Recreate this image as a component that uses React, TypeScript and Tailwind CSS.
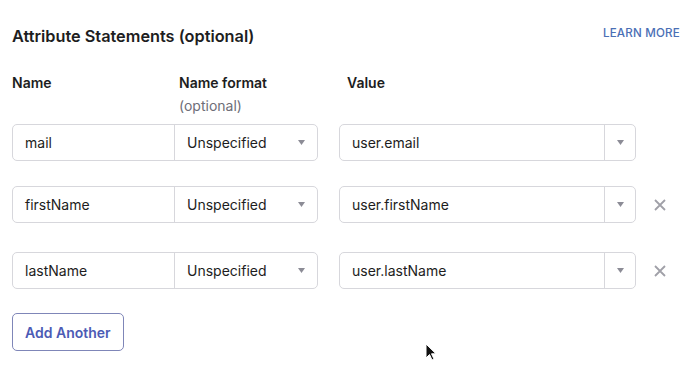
import React from "react";

type Row = { name: string; value: string; removable: boolean; gap: string };

const rows: Row[] = [
  { name: "mail", value: "user.email", removable: false, gap: "mt-[8px]" },
  { name: "firstName", value: "user.firstName", removable: true, gap: "mt-[25px]" },
  { name: "lastName", value: "user.lastName", removable: true, gap: "mt-[29px]" },
];

function Caret() {
  return (
    <svg width="7" height="5" viewBox="0 0 7 5" className="text-[#8c8c96]">
      <path d="M0 0 H7 L3.5 5 Z" fill="currentColor" />
    </svg>
  );
}

function AttributeRow({ row }: { row: Row }) {
  return (
    <div className={`flex items-center ${row.gap}`}>
      <div className="flex w-[306px] h-[37px] rounded-[5px] border border-[#d7d7dc] bg-white">
        <div className="w-[162px] flex items-center pl-3 border-r border-[#d7d7dc] text-[14px] text-[#1d1d21]">
          {row.name}
        </div>
        <div className="flex-1 flex items-center justify-between pl-3 pr-3 text-[14px] text-[#1d1d21]">
          <span>Unspecified</span>
          <Caret />
        </div>
      </div>
      <div className="ml-[21px] flex w-[297px] h-[37px] rounded-[5px] border border-[#d7d7dc] bg-white">
        <div className="flex-1 flex items-center pl-3 border-r border-[#d7d7dc] text-[14px] text-[#1d1d21]">
          {row.value}
        </div>
        <div className="w-[30px] flex items-center justify-center">
          <Caret />
        </div>
      </div>
      {row.removable && (
        <svg width="12" height="12" viewBox="0 0 12 12" className="ml-[18px] text-[#a0a0a8]">
          <path d="M1 1 L11 11 M11 1 L1 11" stroke="currentColor" strokeWidth="1.8" />
        </svg>
      )}
    </div>
  );
}

export default function App() {
  return (
    <div
      className="relative w-[688px] h-[377px] bg-white pl-3 pr-2 pt-6 overflow-hidden"
      style={{ fontFamily: "Inter, 'Noto Sans', sans-serif" }}
    >
      <div className="flex items-center justify-between">
        <h1 className="text-[16.3px] leading-6 font-semibold text-[#1d1d21]">
          Attribute Statements (optional)
        </h1>
        <a className="text-[11.6px] font-medium text-[#4a6fb5] tracking-[0.2px] -mt-1">
          LEARN MORE
        </a>
      </div>
      <div className="flex mt-[25px] text-[14px] leading-5">
        <div className="w-[167px] font-semibold text-[#1d1d21]">Name</div>
        <div className="w-[168px]">
          <div className="font-semibold text-[#1d1d21]">Name format</div>
          <div className="mt-[3px] text-[#6e6e78]">(optional)</div>
        </div>
        <div className="font-semibold text-[#1d1d21]">Value</div>
      </div>
      {rows.map((r) => (
        <AttributeRow key={r.name} row={r} />
      ))}
      <button className="mt-[24px] h-[38px] px-3 rounded-[5px] border border-[#7f86b8] text-[14px] font-semibold text-[#4c5bb5]">
        Add Another
      </button>
      <svg
        width="13"
        height="19"
        viewBox="0 0 13 19"
        className="absolute left-[425px] top-[343px]"
      >
        <path d="M1 1 V15 L4.5 11.5 L7 17 L9 16 L6.5 10.8 L11 10.8 Z" fill="#111" stroke="#fff" strokeWidth="1" />
      </svg>
    </div>
  );
}
